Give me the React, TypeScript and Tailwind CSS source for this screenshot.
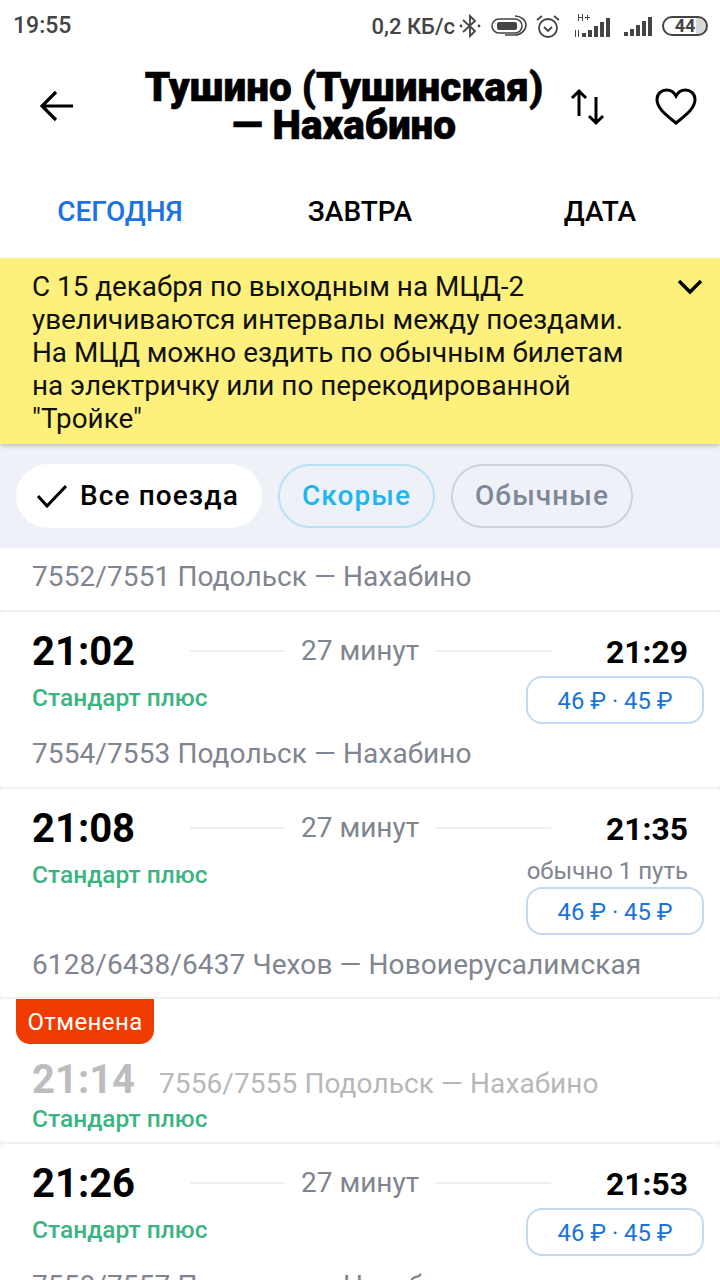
const font = { fontFamily: "Roboto, sans-serif" };

const Price = () => (
    <div className="h-[48px] w-[178px] rounded-[16px] border-2 border-[#c3d9ef] flex items-center justify-center pt-[3px] text-[23.8px] text-[#1a73d9]">
        46 ₽ · 45 ₽
    </div>
);

const Standard = () => (
    <div className="text-[24.5px] leading-[28px] font-medium text-[#3cb482]">Стандарт плюс</div>
);

const Duration = () => (
    <div className="flex-1 flex items-center pl-[56px] -mt-[2px]">
        <div className="w-[95px] h-[2px] bg-[#eef0f3]"/>
        <span className="text-[28px] leading-[32px] text-[#80858f] px-[16px] whitespace-nowrap">27 минут</span>
        <div className="w-[116px] h-[2px] bg-[#eef0f3]"/>
    </div>
);

const Train = ({from, to, note, route, h}: { from: string, to: string, note?: string, route: string, h: string }) => (
    <div className={`bg-white rounded-[4px] px-[16px] ${h}`}>
        <div className="flex items-center pl-[16px] pt-[16px]">
            <div className="w-[102px] text-[40px] leading-[48px] font-bold text-black">{from}</div>
            <Duration/>
            <div className="w-[136px] pr-[16px] text-right text-[31.8px] leading-[48px] font-bold text-black">{to}</div>
        </div>
        <div className="flex justify-between items-start pl-[16px]">
            <div className="pt-[8px]"><Standard/></div>
            <div className="flex flex-col items-end">
                {note && <div className="w-[178px] pr-[16px] pt-[4px] pb-[2px] text-right text-[24px] leading-[28px] text-[#80858f] whitespace-nowrap">{note}</div>}
                <Price/>
            </div>
        </div>
        <div className="pl-[16px] pt-[14px] text-[28px] leading-[32px] tracking-[0.1px] text-[#80858f] whitespace-nowrap">{route}</div>
    </div>
);

const StatusBar = () => (
    <div className="h-[52px] bg-white flex items-center justify-between pl-[13px] pr-[12px] text-[#444] font-medium">
        <span className="text-[23px]">19:55</span>
        <div className="flex items-center">
            <span className="text-[22px]">0,2 КБ/с</span>
            <svg width="22" height="26" viewBox="0 0 22 26" className="ml-[4px]" fill="none" stroke="#444" strokeWidth="1.8">
                <path d="M4 7l12 11-5 5V3l5 5L4 19"/>
                <circle cx="2" cy="13" r="1.4" fill="#444" stroke="none"/>
                <circle cx="20" cy="13" r="1.4" fill="#444" stroke="none"/>
            </svg>
            <svg width="36" height="22" viewBox="0 0 36 22" className="ml-[10px]" fill="none" stroke="#444" strokeWidth="1.6">
                <rect x="1" y="4" width="30" height="14" rx="7"/>
                <rect x="6" y="7" width="20" height="8" rx="2" fill="#444" stroke="none"/>
                <path d="M24 1c6 0 11 4 11 9s-5 10-11 10H14"/>
            </svg>
            <svg width="26" height="26" viewBox="0 0 26 26" className="ml-[8px]" fill="none" stroke="#444" strokeWidth="1.8">
                <circle cx="13" cy="15" r="9"/>
                <path d="M9 14l4 4 4-4M2 7l5-4M24 7l-5-4"/>
            </svg>
            <svg width="42" height="26" viewBox="0 0 42 26" className="ml-[12px]" fill="#444">
                <path d="M5 1h1v3h3V1h1v7H9V5H6v3H5zM12 4h2V2h1v2h2v1h-2v2h-1V5h-2zM2 17h1v7H2zM5 17h1v7H5z"/>
                <rect x="9" y="20" width="4" height="4"/>
                <rect x="15" y="17" width="4" height="7"/>
                <rect x="21" y="13" width="4" height="11"/>
                <rect x="27" y="9" width="4" height="15"/>
                <rect x="33" y="5" width="4" height="19"/>
            </svg>
            <svg width="30" height="22" viewBox="0 0 30 22" className="ml-[8px]" fill="#444">
                <rect x="1" y="17" width="4" height="4"/>
                <rect x="7" y="14" width="4" height="7"/>
                <rect x="13" y="10" width="4" height="11"/>
                <rect x="19" y="6" width="4" height="15"/>
                <rect x="25" y="2" width="4" height="19"/>
            </svg>
            <div className="ml-[9px] w-[46px] h-[20px] rounded-full border-2 border-[#444] bg-[linear-gradient(90deg,white_75%,#d8d8d8_75%)] flex items-center justify-center text-[18px] leading-none font-bold">44</div>
        </div>
    </div>
);

const App = () => {
    return (
        <div className="w-[720px] h-[1280px] overflow-hidden bg-[#f0f1f3]" style={font}>
            <StatusBar/>
            <div className="h-[128px] bg-white flex items-start">
                <div className="w-[112px] pl-[40px] pt-[38px]">
                    <svg width="33" height="32" viewBox="0 0 33 32" fill="none" stroke="#000" strokeWidth="3.2">
                        <path d="M33 16H2M16 2L2 16l14 14"/>
                    </svg>
                </div>
                <div className="w-[464px] text-center text-[40.5px] leading-[38px] font-black text-black [-webkit-text-stroke:0.6px_black] pt-[16px] whitespace-nowrap">
                    Тушино (Тушинская)<br/>— Нахабино
                </div>
                <div className="flex-1 flex pt-[36px]">
                    <svg width="36" height="38" viewBox="0 0 36 38" fill="none" stroke="#000" strokeWidth="3" className="-ml-[6px]">
                        <path d="M9 28V3M2 10l7-7 7 7M26 9v26M19 28l7 7 7-7"/>
                    </svg>
                    <svg width="42" height="38" viewBox="0 0 42 38" fill="none" stroke="#000" strokeWidth="3" className="ml-[49px]">
                        <path d="M21 35C10 26 2 20 2 11.5 2 6 6.5 2 11.5 2c4 0 7.5 2 9.5 6 2-4 5.500-6 9.500-6C35.500 2 40 6 40 11.500 40 20 32 26 21 35z"/>
                    </svg>
                </div>
            </div>
            <div className="h-[78px] bg-white flex items-center text-[28px] font-medium pb-[15px]">
                <div className="w-[240px] text-center text-[#1a73e0]">СЕГОДНЯ</div>
                <div className="w-[240px] text-center text-black">ЗАВТРА</div>
                <div className="w-[240px] text-center text-black">ДАТА</div>
            </div>
            <div className="relative h-[186px] bg-[#fdf07c] pl-[32px] pt-[12px] text-[27.85px] leading-[33px] text-[#111] shadow-[0_2px_4px_rgba(0,0,0,0.2)]">
                <div>С 15 декабря по выходным на МЦД-2</div>
                <div>увеличиваются интервалы между поездами.</div>
                <div>На МЦД можно ездить по обычным билетам</div>
                <div>на электричку или по перекодированной</div>
                <div>"Тройке"</div>
                <svg width="26" height="16" viewBox="0 0 26 16" fill="none" stroke="#000" strokeWidth="3.4" className="absolute right-[17px] top-[21px]">
                    <path d="M2 2l11 11L24 2"/>
                </svg>
            </div>
            <div className="h-[104px] bg-[#eef2f8] flex items-center pl-[16px] gap-[16px] text-[28px] font-medium tracking-[1.1px]">
                <div className="h-[64px] w-[246px] rounded-full bg-white flex items-center pl-[21px] text-black">
                    <svg width="30" height="24" viewBox="0 0 30 24" fill="none" stroke="#000" strokeWidth="3">
                        <path d="M1 12l9 10L29 2"/>
                    </svg>
                    <span className="ml-[13px]">Все поезда</span>
                </div>
                <div className="h-[64px] w-[157px] rounded-full border-2 border-[#b8e2f5] flex items-center justify-center text-[#1fb6ee]">Скорые</div>
                <div className="h-[64px] w-[182px] rounded-full border-2 border-[#ccd2de] flex items-center justify-center text-[#7f8798]">Обычные</div>
            </div>
            <div className="h-[62px] bg-white pl-[32px] pt-[13px] text-[28px] leading-[32px] tracking-[0.1px] text-[#80858f]">7552/7551 Подольск — Нахабино</div>
            <div className="flex flex-col gap-[2px] pt-[2px]">
                <Train h="h-[175px]" from="21:02" to="21:29" route="7554/7553 Подольск — Нахабино"/>
                <Train h="h-[208px]" from="21:08" to="21:35" note="обычно 1 путь" route="6128/6438/6437 Чехов — Новоиерусалимская"/>
                <div className="h-[143px] bg-white rounded-[4px] pl-[16px]">
                    <div className="w-[138px] h-[45px] bg-[#f03c00] rounded-b-[14px] flex items-center justify-center text-[24px] text-white tracking-[0.4px]">Отменена</div>
                    <div className="flex items-start pl-[16px]">
                        <span className="w-[127px] mt-[12px] text-[40px] leading-[48px] font-bold text-[#bdbdbd]">21:14</span>
                        <span className="mt-[16px] text-[28px] leading-[48px] tracking-[0.1px] text-[#b8b8b8] whitespace-nowrap">7556/7555 Подольск — Нахабино</span>
                    </div>
                    <div className="pl-[16px] -mt-[3px]"><Standard/></div>
                </div>
                <Train h="h-[175px]" from="21:26" to="21:53" route="7558/7557 Подольск — Нахабино"/>
            </div>
        </div>
    );
}

export default App;
